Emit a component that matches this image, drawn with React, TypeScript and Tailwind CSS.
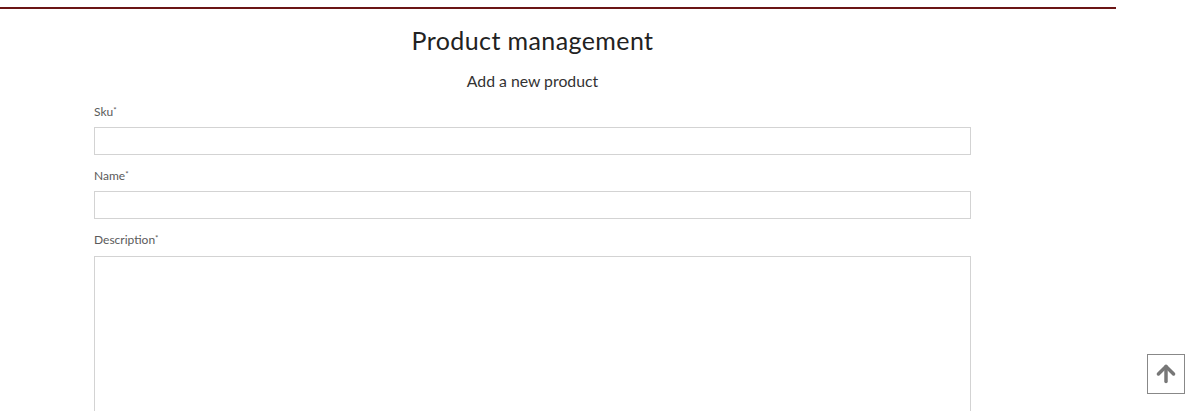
import { ArrowUp } from "lucide-react";

function Field({ label, children }: { label: string; children: React.ReactNode }) {
  return (
    <div className="flex flex-col">
      <label className="text-[12px] leading-[16px] text-[#5a5a5a] mb-[7px]">
        {label}
        <sup className="text-[8px] top-[-0.4em]">*</sup>
      </label>
      {children}
    </div>
  );
}

export default function App() {
  return (
    <div
      className="relative h-[411px] w-[1200px] overflow-hidden bg-white"
      style={{ fontFamily: "Lato, 'Liberation Sans', sans-serif" }}
    >
      <div className="mt-[7px] h-[2px] w-[1116px] bg-[#6b1515]" />

      <div className="ml-[94px] w-[877px]">
        <h1 className="mt-[15px] text-center text-[25px] leading-[32px] text-[#222] tracking-[0.4px]">
          Product management
        </h1>
        <p className="mt-[14px] text-center text-[15.8px] leading-[22px] text-[#333]">
          Add a new product
        </p>

        <form className="mt-[12px] flex flex-col gap-[13px]">
          <Field label="Sku">
            <input className="h-[28px] border border-[#d3d3d3] outline-none" />
          </Field>
          <Field label="Name">
            <input className="h-[28px] border border-[#d3d3d3] outline-none" />
          </Field>
          <Field label="Description">
            <textarea className="mt-[1px] h-[200px] resize-none border border-[#d3d3d3] outline-none" />
          </Field>
        </form>
      </div>

      <button className="absolute left-[1147px] top-[354px] flex h-[40px] w-[38px] items-center justify-center border border-[#888] bg-white text-[#777]">
        <ArrowUp size={26} strokeWidth={3.2} />
      </button>
    </div>
  );
}
